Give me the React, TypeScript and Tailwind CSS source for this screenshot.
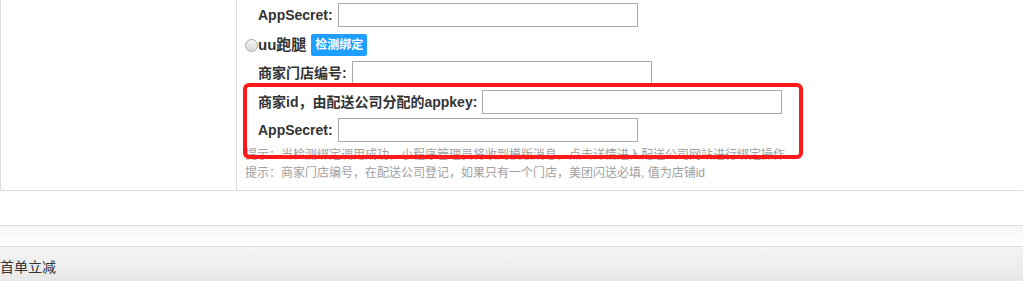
import React from 'react';

const font = { fontFamily: '"Liberation Sans", "Noto Sans CJK SC", sans-serif' };

const TextBox: React.FC<{ className?: string }> = ({ className }) => (
  <input
    type="text"
    className={`h-[24px] w-[300px] border border-[#a9a9a9] bg-white outline-none ${className ?? ''}`}
  />
);

const Field: React.FC<{ label: string; className?: string }> = ({ label, className }) => (
  <div className={`flex items-center h-[24px] pl-[13px] ${className ?? ''}`}>
    <span className="font-bold text-[14px] text-[#333] mr-[5px] whitespace-nowrap">{label}</span>
    <TextBox />
  </div>
);

export default function App() {
  return (
    <div className="w-[1023px] h-[281px] overflow-hidden bg-white relative" style={font}>
      {/* settings table */}
      <div className="flex border-b border-l border-[#ddd]">
        <div className="w-[236px] border-r border-[#ddd]" />
        <div className="flex-1 pl-[8px] pb-[8px]">
          <Field label="AppSecret:" className="mt-[3px]" />

          {/* uu row */}
          <div className="flex items-center h-[22px] mt-[7px]">
            <span className="w-[13px] h-[13px] rounded-full border border-[#aaa] bg-gradient-to-b from-[#f4f4f4] to-[#d8d8d8]" />
            <span className="font-bold text-[15px] text-[#333]">uu跑腿</span>
            <button className="ml-[5px] h-[22px] px-[4px] rounded-[2px] bg-[#1e9fff] text-white text-[12px] font-bold leading-none">
              检测绑定
            </button>
          </div>

          <Field label="商家门店编号:" className="mt-[5px]" />
          <Field label="商家id，由配送公司分配的appkey:" className="mt-[5px]" />
          <Field label="AppSecret:" className="mt-[4px]" />

          <p className="mt-[4px] text-[12px] leading-[18px] text-[#a0a0a0]">
            提示：当检测绑定调用成功，小程序管理员将收到模版消息，点击详情进入配送公司网站进行绑定操作
          </p>
          <p className="text-[12px] leading-[18px] text-[#a0a0a0]">
            提示：商家门店编号，在配送公司登记，如果只有一个门店，美团闪送必填, 值为店铺id
          </p>
        </div>
      </div>

      {/* spacer rows */}
      <div className="h-[35px] border-b border-[#ddd]" />
      <div className="h-[21px] border-b border-[#ddd] bg-gradient-to-b from-[#f7f7f7] to-white" />

      {/* next panel header */}
      <div className="h-[40px] leading-[40px] text-[14px] text-[#333] bg-gradient-to-b from-[#f4f4f4] to-[#e6e6e6]">
        首单立减
      </div>

      {/* red annotation box */}
      <div className="absolute left-[243px] top-[83px] w-[560px] h-[76px] border-[4px] border-[#ff1a1a] rounded-[6px] pointer-events-none" />
    </div>
  );
}
